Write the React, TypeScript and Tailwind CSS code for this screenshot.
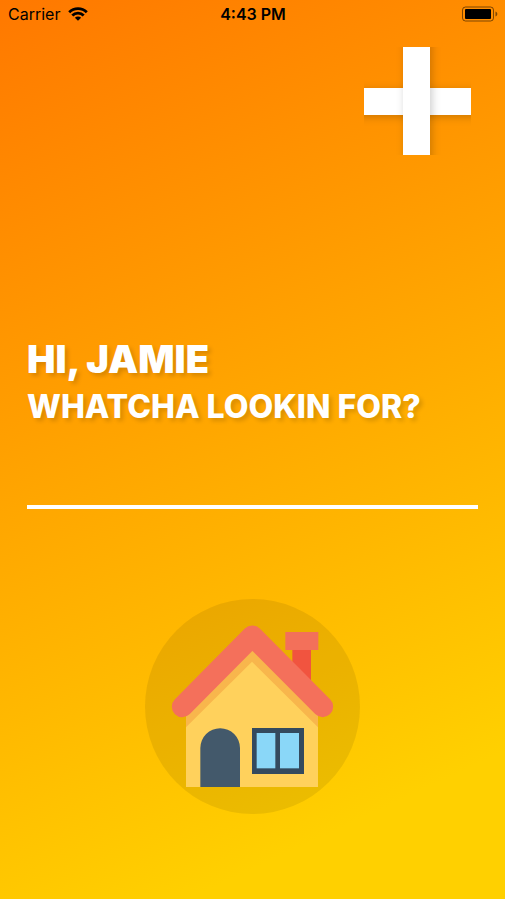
import { useState } from "react";

function WifiIcon() {
  return (
    <svg className="h-[14px] w-5" viewBox="0 0 20 14" aria-hidden="true">
      <g fill="none" stroke="#000" strokeWidth="2.8">
        <path d="M1.200 5.200A12.600 12.600 0 0 1 18.800 5.200" />
        <path d="M4.300 8.500A8 8 0 0 1 15.700 8.500" />
      </g>
      <path d="M10 13.800 6.900 10.800A4.400 4.400 0 0 1 13.100 10.800Z" fill="#000" />
    </svg>
  );
}

function BatteryIcon() {
  return (
    <svg className="h-4 w-9" viewBox="0 0 36 16" aria-hidden="true">
      <rect x="0.5" y="1" width="31" height="14" rx="3" fill="none" stroke="#000" strokeOpacity="0.5" />
      <rect x="3" y="3" width="26" height="10" rx="1" fill="#000" />
      <path d="M33.500 5.500c2.400 1 2.400 4 0 5Z" fill="#000" fillOpacity="0.5" />
    </svg>
  );
}

function StatusBar() {
  return (
    <div className="grid h-7 grid-cols-3 items-center pr-[7px] pl-2 font-['Inter',sans-serif] text-base leading-5 text-black">
      <div className="flex items-center gap-2">
        <span>Carrier</span>
        <WifiIcon />
      </div>
      <time className="text-center font-semibold">4:43 PM</time>
      <div className="flex justify-end">
        <BatteryIcon />
      </div>
    </div>
  );
}

function PlusIcon() {
  return (
    <svg className="h-[108px] w-[107px] overflow-visible" viewBox="0 0 107 108" aria-hidden="true">
      <defs>
        <filter id="soft" x="-50%" y="-50%" width="200%" height="200%">
          <feGaussianBlur stdDeviation="4" />
        </filter>
        <clipPath id="across">
          <rect x="0" y="30" width="107" height="50" />
        </clipPath>
        <clipPath id="upright">
          <rect x="28" y="0" width="50" height="108" />
        </clipPath>
      </defs>
      <g clipPath="url(#across)">
        <rect x="-8" y="43" width="123" height="27" fillOpacity="0.2" filter="url(#soft)" />
      </g>
      <rect y="41" width="107" height="27" fill="#fff" />
      <g clipPath="url(#upright)">
        <rect x="41" y="-8" width="27" height="124" fillOpacity="0.2" filter="url(#soft)" />
      </g>
      <rect x="39" width="27" height="108" fill="#fff" />
    </svg>
  );
}

function HouseIcon() {
  return (
    <svg className="size-full" viewBox="30 27 645 645" aria-hidden="true">
      <rect x="472" y="170" width="56" height="110" fill="#f1543f" />
      <rect x="451" y="126" width="99" height="54" fill="#f3705a" />
      <path d="M153 370 352 170 549 370V591H153Z" fill="#f8b64c" />
      <path d="M153 412 351 215 549 412V591H153Z" fill="#ffd15c" />
      <path d="M142 350 352 138 563 350" fill="none" stroke="#f4705b" strokeWidth="63" strokeLinecap="round" strokeLinejoin="round" />
      <path d="M196 591V474a59.500 59.500 0 0 1 119 0V591Z" fill="#43596b" />
      <rect x="351" y="414" width="156" height="138" fill="#344a5e" />
      <rect x="365" y="429" width="56" height="106" fill="#8ad7f8" />
      <rect x="435" y="429" width="57" height="106" fill="#8ad7f8" />
    </svg>
  );
}

export default function App() {
  const [query, setQuery] = useState("");
  return (
    <div className="flex min-h-screen flex-col bg-linear-[155deg,#ff7800_0%,#ffd000_87%]">
      <StatusBar />
      <header className="flex justify-end pt-[19px] pr-[34px]">
        <button type="button" aria-label="Add">
          <PlusIcon />
        </button>
      </header>
      <main className="flex flex-col px-[27px] pt-[180px] font-['Inter',sans-serif] text-white">
        <h1 className="text-[38px] leading-12 font-black text-shadow-[3px_3px_4px_rgb(0_0_0/0.15)]">HI, JAMIE</h1>
        <label htmlFor="search" className="text-[32px] leading-12 font-extrabold whitespace-nowrap text-shadow-[3px_3px_4px_rgb(0_0_0/0.15)]">
          WHATCHA LOOKIN FOR?
        </label>
        <input
          id="search"
          type="text"
          value={query}
          onChange={(event) => setQuery(event.target.value)}
          className="mt-6 h-[54px] w-full border-b-4 border-white bg-transparent text-3xl font-bold outline-none"
        />
        <button type="button" aria-label="Home" className="mt-[90px] mb-12 size-[215px] self-center rounded-full bg-black/8">
          <HouseIcon />
        </button>
      </main>
    </div>
  );
}
